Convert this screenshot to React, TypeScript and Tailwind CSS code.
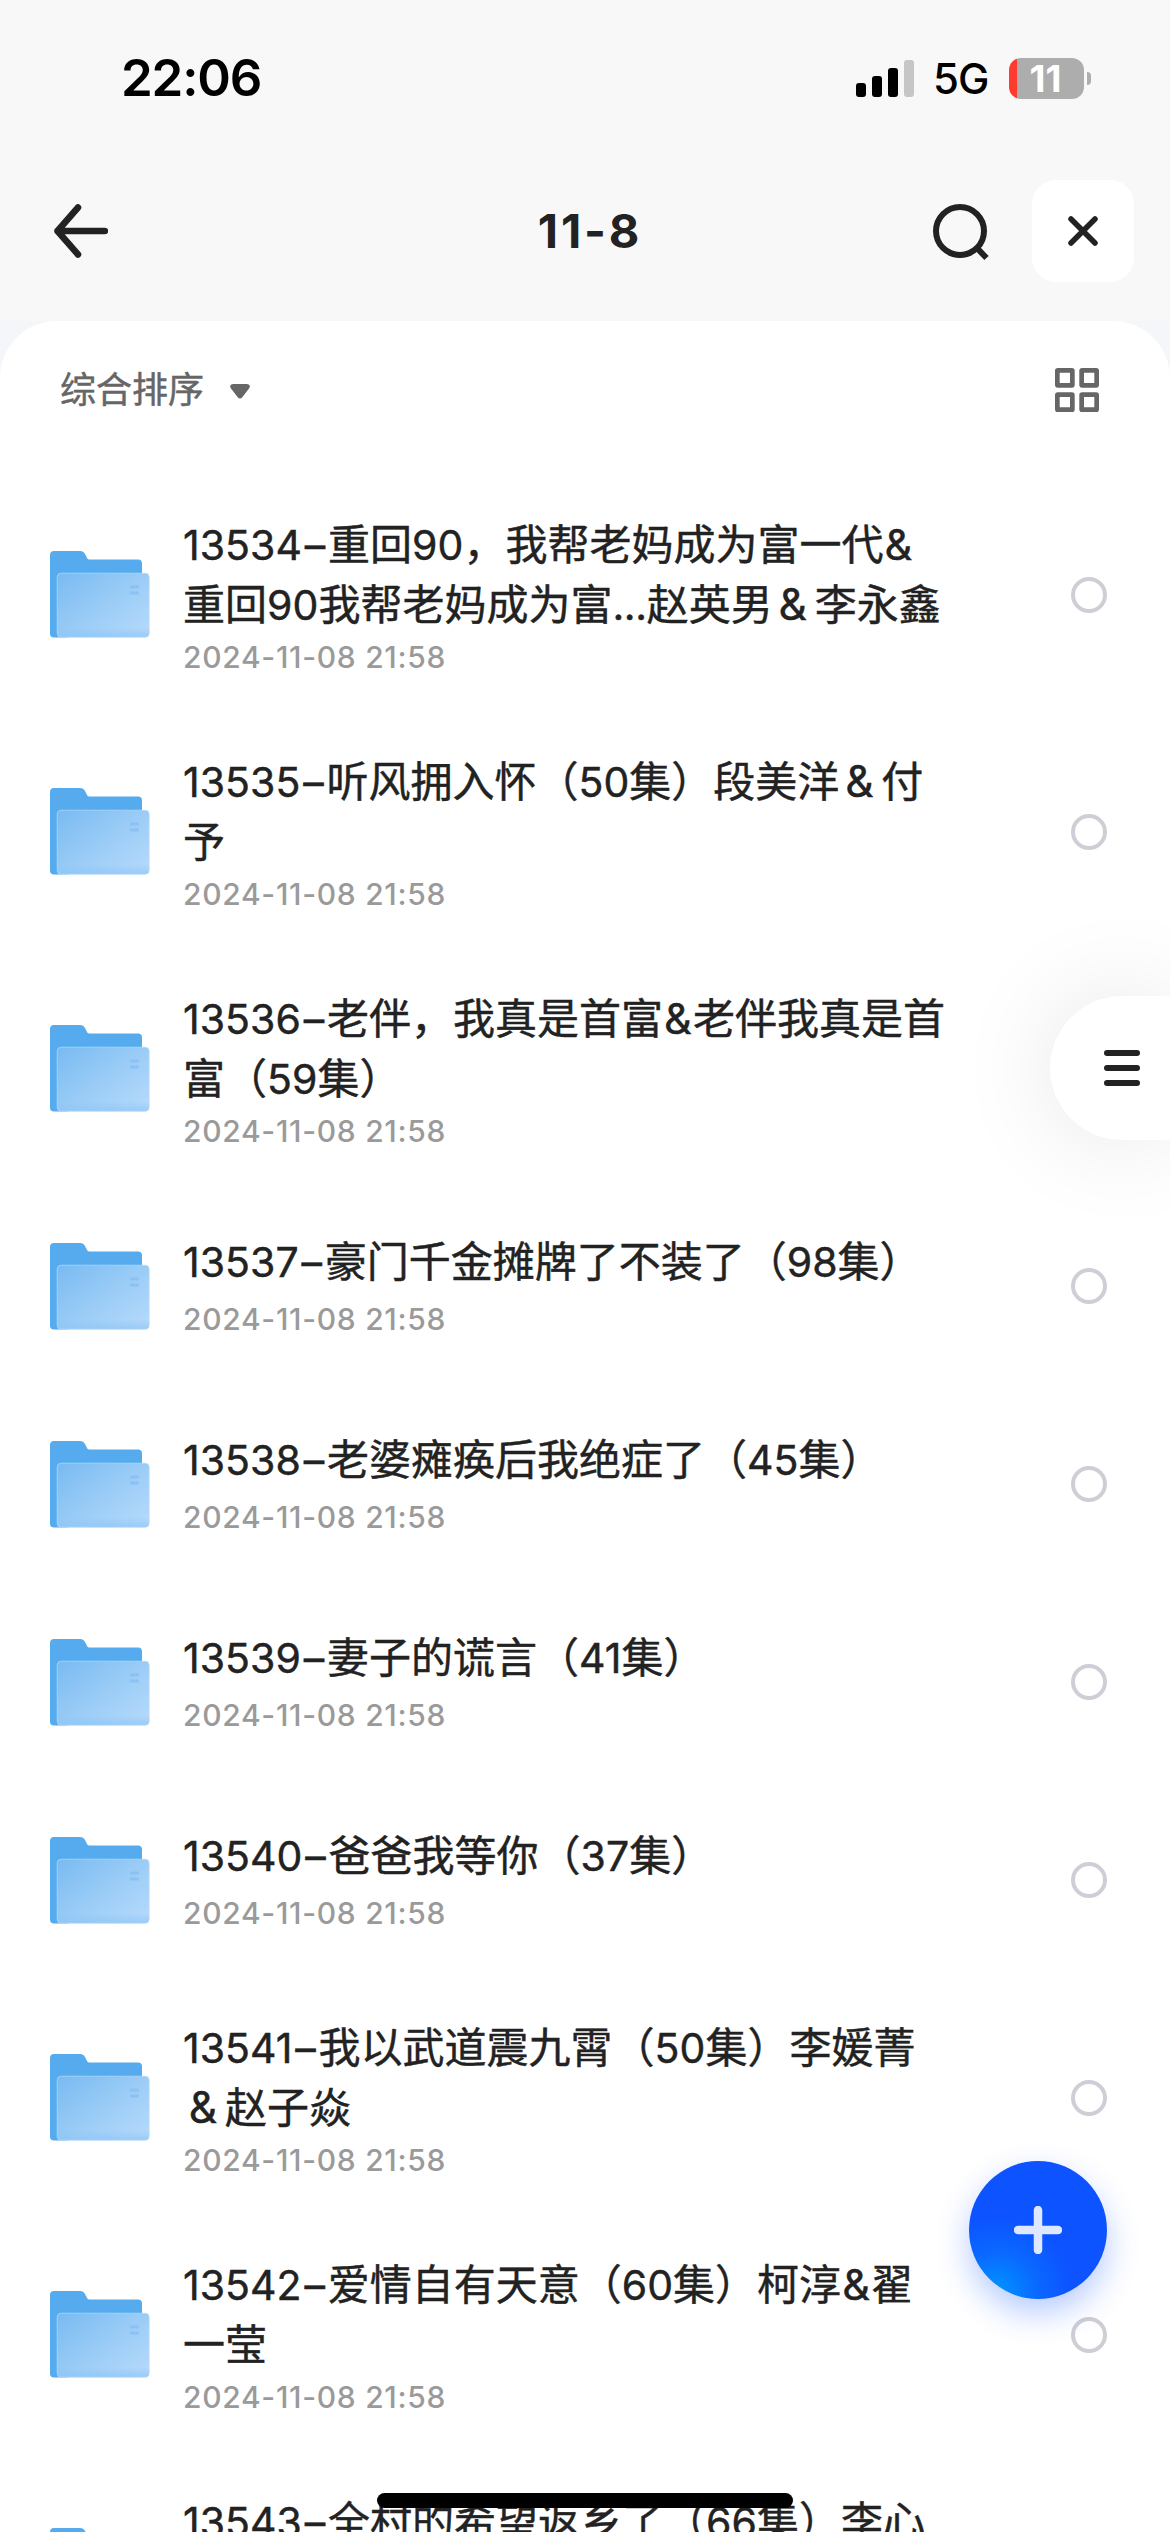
import React from "react";

type Entry = { lines: string[] };

const entries: Entry[] = [
  { lines: ["13534–重回90，我帮老妈成为富一代&", "重回90我帮老妈成为富...赵英男＆李永鑫"] },
  { lines: ["13535–听风拥入怀（50集）段美洋＆付", "予"] },
  { lines: ["13536–老伴，我真是首富&老伴我真是首", "富（59集）"] },
  { lines: ["13537–豪门千金摊牌了不装了（98集）"] },
  { lines: ["13538–老婆瘫痪后我绝症了（45集）"] },
  { lines: ["13539–妻子的谎言（41集）"] },
  { lines: ["13540–爸爸我等你（37集）"] },
  { lines: ["13541–我以武道震九霄（50集）李媛菁", "＆赵子焱"] },
  { lines: ["13542–爱情自有天意（60集）柯淳&翟", "一莹"] },
  { lines: ["13543–全村的希望返乡了（66集）李心", "艾"] },
];

function Piece({ text }: { text: string }) {
  if (text === "＆") {
    return <span className="inline-block w-[42px] pr-[2px] text-center text-[44px] leading-none">&amp;</span>;
  }
  if (text === "&") {
    return <span className="inline-block w-[30px] text-center text-[43px] leading-none">&amp;</span>;
  }
  if (text === "–") {
    return <span className="inline-block w-[26px] text-center text-[41px] leading-none">–</span>;
  }
  if (text.startsWith(".")) {
    return <span className="text-[41px] tracking-[-0.4px]">{text}</span>;
  }
  if (/^[0-9]/.test(text)) {
    return <span className="text-[41px] tracking-[0.05px]">{text}</span>;
  }
  return <span>{text}</span>;
}

function Line({ text }: { text: string }) {
  const parts = text.split(/([0-9]+|\.+|[&＆–])/).filter(Boolean);
  return (
    <div className="h-[60px] whitespace-nowrap text-[42px] leading-[60px] text-[#222] [-webkit-text-stroke:0.45px_#222]">
      {parts.map((p, i) => (
        <Piece key={i} text={p} />
      ))}
    </div>
  );
}

function Folder() {
  return (
    <svg className="block h-[87px] w-[100px]" viewBox="0 0 100 87">
      <defs>
        <linearGradient id="front" x1="0" y1="0" x2="1" y2="0.9">
          <stop offset="0" stopColor="#79baf1" />
          <stop offset="0.5" stopColor="#98cbf6" />
          <stop offset="1" stopColor="#b5d9fb" />
        </linearGradient>
        <linearGradient id="foot" x1="0" y1="0" x2="0" y2="1">
          <stop offset="0" stopColor="#8cc4f5" stopOpacity="0" />
          <stop offset="1" stopColor="#8cc4f5" stopOpacity="0.7" />
        </linearGradient>
      </defs>
      <path d="M0 4Q0 0 4 0H30Q33.5 0 35 3L37 7Q37.6 8.500 39.500 8.500H88Q92 8.500 92 12.500V40H0Z" fill="#55abee" />
      <rect x="0" y="20" width="20" height="66.500" rx="4" fill="#55abee" />
      <rect x="7.200" y="22.200" width="92" height="64" rx="4" fill="url(#front)" />
      <rect x="7.200" y="76" width="92" height="10.200" rx="4" fill="url(#foot)" />
      <rect x="7.200" y="22.200" width="92" height="64" rx="4" fill="none" stroke="#b9dbf9" strokeOpacity="0.7" />
      <rect x="80" y="34.500" width="9" height="3" rx="1" fill="#8cc1f4" />
      <rect x="80" y="40.500" width="9" height="3" rx="1" fill="#8cc1f4" />
    </svg>
  );
}

function Row({ entry }: { entry: Entry }) {
  const two = entry.lines.length > 1;
  return (
    <li
      className={
        two
          ? "flex h-[237px] shrink-0 items-center pl-[49.500px] pr-[63px]"
          : "flex h-[198px] shrink-0 items-center pl-[49.500px] pr-[63px]"
      }
    >
      <Folder />
      <div className={two ? "ml-[33.500px] flex-1 pt-1" : "ml-[33.500px] flex-1 pt-px"}>
        {entry.lines.map((l) => (
          <Line key={l} text={l} />
        ))}
        <div
          className={
            two
              ? "h-11 text-[30px] font-medium leading-[44px] tracking-[0.7px] text-[#9a9a9a]"
              : "mt-[5px] h-11 text-[30px] font-medium leading-[44px] tracking-[0.7px] text-[#9a9a9a]"
          }
        >
          2024-11-08 21:58
        </div>
      </div>
      <span className="size-9 rounded-full border-4 border-[#cfced6]" />
    </li>
  );
}

export default function App() {
  return (
    <div
      lang="zh-CN"
      className="relative flex h-[2532px] w-[1170px] flex-col overflow-hidden bg-[#f5f6f9] font-['Inter','Noto_Sans_CJK_SC',sans-serif]"
    >
      <div className="flex h-[156px] shrink-0 items-center justify-between bg-[#f8f8f8] pl-[121px] pr-[79px]">
        <div className="text-[51px] font-semibold leading-[60px] tracking-[-1.200px] text-black">22:06</div>
        <div className="flex items-center">
          <div className="flex h-[37px] items-end gap-[6px]">
            <span className="h-[14px] w-[10px] rounded-[3px] bg-black" />
            <span className="h-[21px] w-[10px] rounded-[3px] bg-black" />
            <span className="h-[29px] w-[10px] rounded-[3px] bg-black" />
            <span className="h-[37px] w-[10px] rounded-[3px] bg-[#c6c6c6]" />
          </div>
          <span className="ml-[19px] w-[76px] pt-[2px] text-[42px] font-medium leading-[44px] tracking-[-1px] text-black">5G</span>
          <div className="flex h-[41px] w-[75px] items-center justify-center rounded-[12px] bg-[linear-gradient(90deg,#ff3b30_8px,#adadad_8px)] pr-[2px] text-[37px] font-bold leading-[41px] text-white">
            11
          </div>
          <span className="ml-[3px] h-[13px] w-[4px] rounded-r-full bg-[#adadad]" />
        </div>
      </div>

      <header className="flex h-[165px] shrink-0 items-start bg-[#f8f8f8] pl-[54px] pr-9 pt-6">
        <div className="flex h-[102px] w-[280px] items-center">
          <svg className="h-[54px] w-[54px]" viewBox="0 0 54 54" fill="none" stroke="#222" strokeWidth="6.500" strokeLinecap="round" strokeLinejoin="round">
            <path d="M24 3.500L3.500 27L24 50.500M3.500 27H51" />
          </svg>
        </div>
        <h1 className="flex-1 pl-[13px] text-center text-[47px] font-bold leading-[102px] tracking-[2.800px] text-[#222]">11-8</h1>
        <div className="flex h-[102px] w-[301px] items-center justify-end">
          <svg className="mr-[42px] h-[58px] w-[58px] overflow-visible" viewBox="0 0 58 58" fill="none" stroke="#222" strokeWidth="6">
            <circle cx="28" cy="29" r="24" />
            <path d="M44.500 45.500L54.500 56" />
          </svg>
          <div className="flex size-[102px] items-center justify-center rounded-[24px] bg-white">
            <svg className="size-[30px]" viewBox="0 0 30 30" fill="none" stroke="#222" strokeWidth="5.500" strokeLinecap="round">
              <path d="M3 3L27 27M27 3L3 27" />
            </svg>
          </div>
        </div>
      </header>

      <main className="flex min-h-0 flex-1 flex-col overflow-hidden rounded-t-[57px] bg-white">
        <div className="flex h-[155px] shrink-0 items-start justify-between pl-[60px] pr-[71px] pt-[45px]">
          <div className="flex h-[48px] items-center">
            <span className="text-[36px] leading-[48px] text-[#666] [-webkit-text-stroke:0.45px_#666]">综合排序</span>
            <svg className="ml-[26px] mt-[2px] h-[15px] w-[20px]" viewBox="0 0 20 15" fill="#666">
              <path d="M3 0H17Q21.500 0.500 19 4.500L12.500 13Q10 16 7.500 13L1 4.500Q-1.500 0.500 3 0Z" />
            </svg>
          </div>
          <svg className="mt-[2px] size-[44px]" viewBox="0 0 44 44" fill="none" stroke="#666" strokeWidth="4.700">
            <rect x="2.350" y="2.350" width="15" height="15" rx="0.500" />
            <rect x="26.650" y="2.350" width="15" height="15" rx="0.500" />
            <rect x="2.350" y="26.650" width="15" height="15" rx="0.500" />
            <rect x="26.650" y="26.650" width="15" height="15" rx="0.500" />
          </svg>
        </div>
        <ul className="flex flex-col">
          {entries.map((e) => (
            <Row key={e.lines[0]} entry={e} />
          ))}
        </ul>
      </main>

      <div className="absolute right-0 top-[996px] flex h-[144px] w-[120px] flex-col justify-center gap-[9px] rounded-l-full bg-white pl-[54px] shadow-[0_0_100px_rgba(0,0,0,0.1)]">
        <span className="h-[6px] w-9 rounded-full bg-[#222]" />
        <span className="h-[6px] w-9 rounded-full bg-[#222]" />
        <span className="h-[6px] w-9 rounded-full bg-[#222]" />
      </div>

      <div className="absolute left-[969px] top-[2161px] flex size-[138px] items-center justify-center rounded-full bg-[radial-gradient(circle_at_20%_95%,#0094ff_0%,#0a68ff_24%,#0d53ff_44%)] shadow-[0_14px_32px_rgba(13,83,255,0.3)]">
        <svg className="size-[48px]" viewBox="0 0 48 48">
          <path d="M24 4V44M4 24H44" stroke="#dde7ff" strokeWidth="8.500" strokeLinecap="round" />
        </svg>
      </div>

      <div className="absolute left-[377px] top-[2493px] h-[15px] w-[416px] rounded-full bg-black" />
    </div>
  );
}
